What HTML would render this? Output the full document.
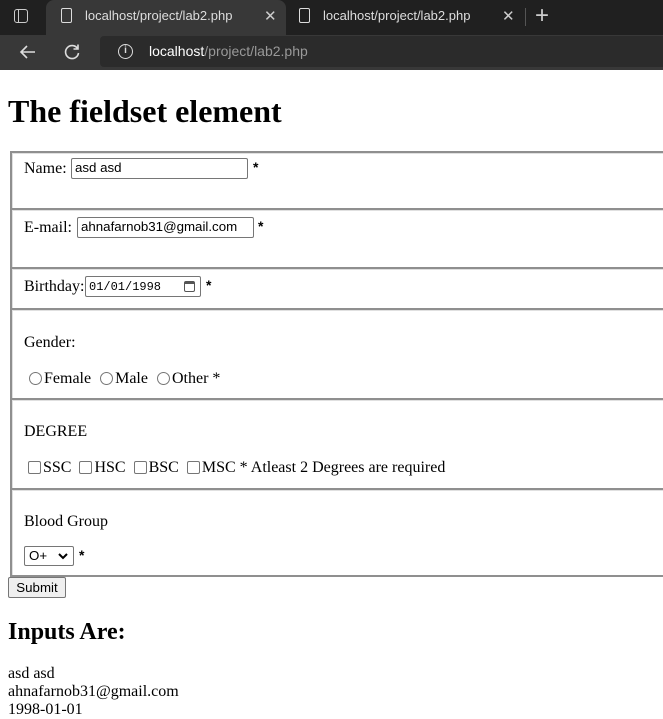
<!DOCTYPE html>
<html><head><meta charset="utf-8"><style>
*{margin:0;padding:0;box-sizing:border-box}
body{width:663px;height:718px;overflow:hidden;background:#fff;font-family:"Liberation Serif",serif;font-size:16px;color:#000;position:relative}
.a{position:absolute;white-space:nowrap}
.fs{position:absolute;left:10px;width:670px;border:2px solid #8f8f8f;box-shadow:inset 1px 1px 0 #e0e0e0}
.inp{position:absolute;border:1px solid #767676;border-radius:2px;font-family:"Liberation Sans",sans-serif;font-size:13.3px;padding:1px 3px;line-height:16px;background:#fff}
.rb{display:inline-block;width:13px;height:13px;border:1px solid #767676;border-radius:50%;vertical-align:-2px;margin:0 2px 0 5px}
.cb{display:inline-block;width:13px;height:13px;border:1px solid #767676;border-radius:2px;vertical-align:-2px;margin:0 2px 0 4px}
.st{font-family:'Liberation Sans';font-size:14px;font-weight:bold}
</style></head><body>
<div class="a" style="left:0;top:0;width:663px;height:35px;background:#202020"></div>
<div class="a" style="left:46px;top:0;width:240px;height:35px;background:#383838;border-radius:8px 8px 0 0"></div>
<div class="a" style="left:14px;top:9px;width:14px;height:14px;border:1.5px solid #ccc;border-radius:3px"></div>
<div class="a" style="left:14px;top:9px;width:5px;height:14px;border-right:1.5px solid #ccc"></div>
<div class="a" style="left:61px;top:8px;width:11px;height:15px;border:1.5px solid #ddd;border-radius:2px"></div>
<div class="a" style="left:85px;top:8px;color:#ddd;font:13px 'Liberation Sans',sans-serif">localhost/project/lab2.php</div>
<div class="a" style="left:264px;top:7px;color:#ccc;font:15px 'Liberation Sans',sans-serif">✕</div>
<div class="a" style="left:299px;top:8px;width:11px;height:15px;border:1.5px solid #ddd;border-radius:2px"></div>
<div class="a" style="left:323px;top:8px;color:#ddd;font:13px 'Liberation Sans',sans-serif">localhost/project/lab2.php</div>
<div class="a" style="left:502px;top:7px;color:#ccc;font:15px 'Liberation Sans',sans-serif">✕</div>
<div class="a" style="left:525px;top:8px;width:1px;height:18px;background:#555"></div>
<div class="a" style="left:535px;top:2px;color:#ccc;font:24px 'Liberation Sans',sans-serif">+</div>
<div class="a" style="left:0;top:35px;width:663px;height:35px;background:#383838"></div>
<svg class="a" style="left:18px;top:42px" width="20" height="20" viewBox="0 0 20 20"><path d="M17 10H3M9 4L3 10l6 6" stroke="#ddd" stroke-width="1.6" fill="none"/></svg>
<svg class="a" style="left:62px;top:42px" width="20" height="20" viewBox="0 0 20 20"><path d="M15.5 6.5A6.5 6.5 0 1 0 16.5 11M16 2.5V7h-4.5" stroke="#ddd" stroke-width="1.6" fill="none"/></svg>
<div class="a" style="left:100px;top:36px;width:570px;height:31px;background:#2b2b2b;border-radius:4px"></div>
<div class="a" style="left:118px;top:44px;width:15px;height:15px;border:1.5px solid #ddd;border-radius:50%;color:#ddd;font:bold 10px 'Liberation Sans',sans-serif;text-align:center;line-height:12px">i</div>
<div class="a" style="left:149px;top:43px;font:14px 'Liberation Sans',sans-serif;color:#999"><span style="color:#fff">localhost</span>/project/lab2.php</div>

<div class="a" style="left:8px;top:93px;font-weight:bold;font-size:32px">The fieldset element</div>

<div class="fs" style="top:151px;height:59px"></div>
<div class="fs" style="top:208px;height:61px"></div>
<div class="fs" style="top:267px;height:43px"></div>
<div class="fs" style="top:308px;height:92px"></div>
<div class="fs" style="top:398px;height:92px"></div>
<div class="fs" style="top:488px;height:89px"></div>

<div class="a" style="left:24px;top:160px">Name:</div>
<div class="inp" style="left:71px;top:158px;width:177px;height:21px">asd asd</div>
<div class="a st" style="left:253px;top:159px">*</div>

<div class="a" style="left:24px;top:219px">E-mail:</div>
<div class="inp" style="left:77px;top:217px;width:177px;height:21px">ahnafarnob31@gmail.com</div>
<div class="a st" style="left:258px;top:218px">*</div>

<div class="a" style="left:24px;top:278px">Birthday:</div>
<div class="inp" style="left:85px;top:276px;width:116px;height:21px;font-family:'Liberation Mono',monospace;font-size:12px;padding-top:2px">01/01/1998</div>
<div class="a" style="left:184px;top:281px;width:11px;height:11px;border:1.2px solid #555;border-radius:2px;border-top-width:3px"></div>
<div class="a st" style="left:206px;top:277px">*</div>

<div class="a" style="left:24px;top:334px">Gender:</div>
<div class="a" style="left:24px;top:370px"><span class="rb"></span>Female <span class="rb"></span>Male <span class="rb"></span>Other *</div>

<div class="a" style="left:24px;top:423px">DEGREE</div>
<div class="a" style="left:24px;top:459px"><span class="cb"></span>SSC <span class="cb"></span>HSC <span class="cb"></span>BSC <span class="cb"></span>MSC * Atleast 2 Degrees are required</div>

<div class="a" style="left:24px;top:513px">Blood Group</div>
<div class="inp" style="left:24px;top:546px;width:50px;height:20px;padding-left:4px">O+</div>
<svg class="a" style="left:58px;top:552px" width="10" height="8" viewBox="0 0 10 8"><path d="M1 2l4 4 4-4" stroke="#000" stroke-width="2" fill="none"/></svg>
<div class="a st" style="left:79px;top:547px">*</div>

<div class="a" style="left:8px;top:577px;width:58px;height:21px;background:#efefef;border:1px solid #767676;border-radius:2px;font:13.3px 'Liberation Sans',sans-serif;text-align:center;line-height:19px">Submit</div>

<div class="a" style="left:8px;top:619px;font-weight:bold;font-size:24px">Inputs Are:</div>
<div class="a" style="left:8px;top:665px;line-height:18px">asd asd<br>ahnafarnob31@gmail.com<br>1998-01-01</div>
</body></html>
